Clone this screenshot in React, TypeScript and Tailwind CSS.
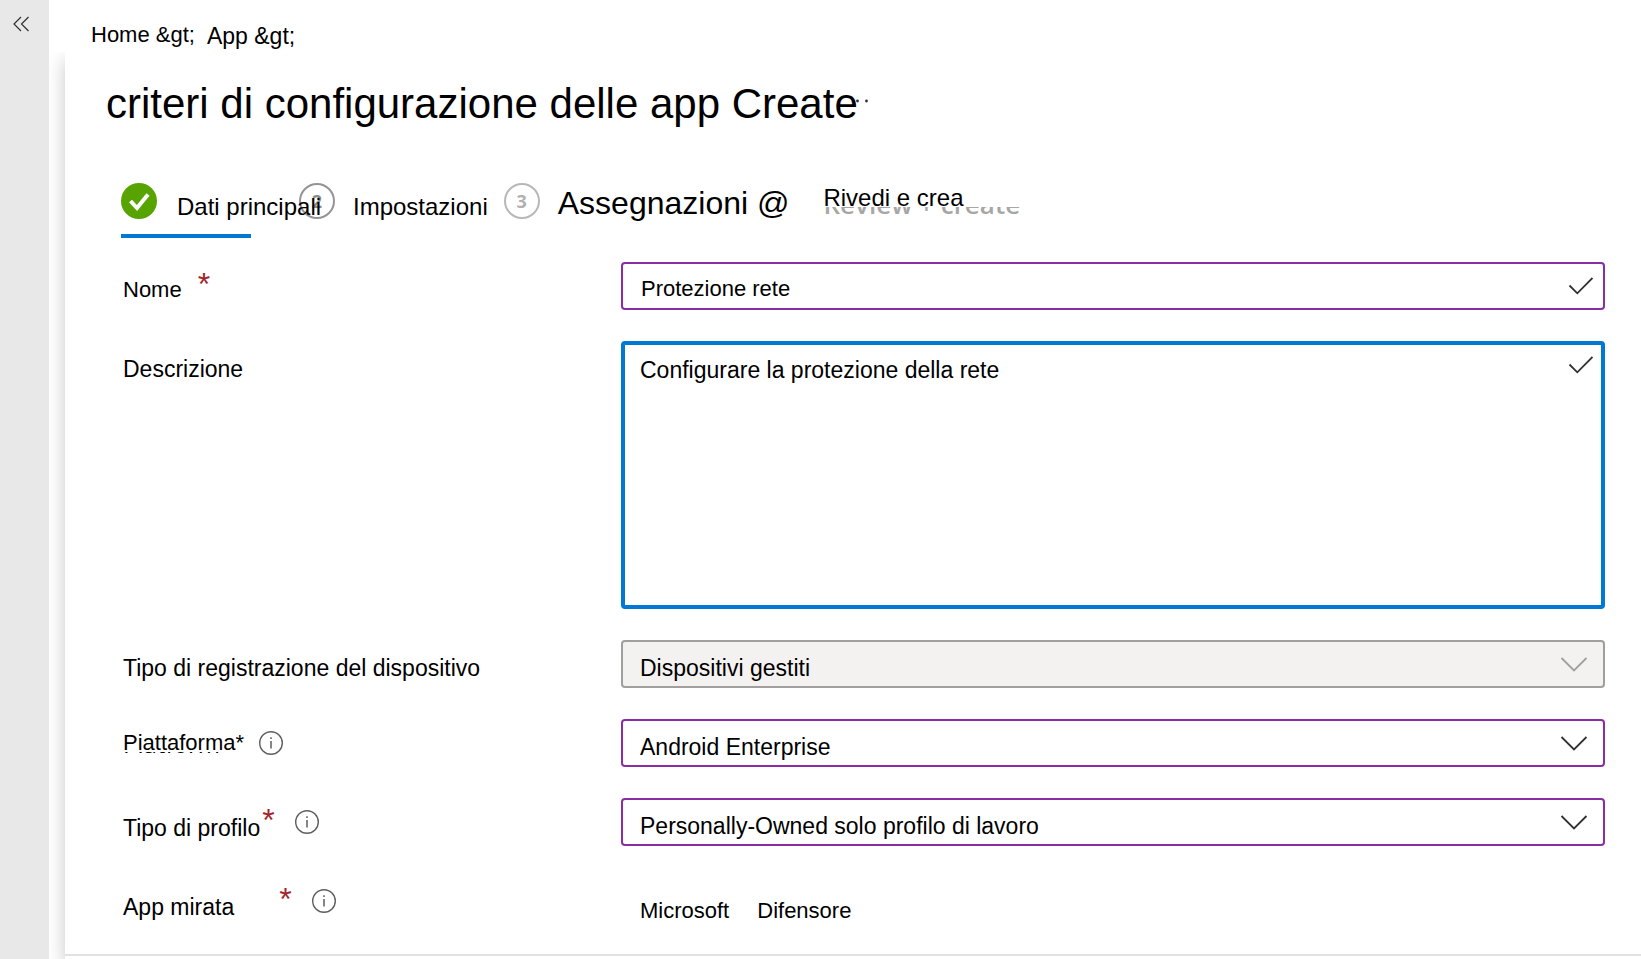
import { FC, ReactNode } from "react";

interface FieldRowProps {
  id: string;
  label: ReactNode;
  labelClass?: string;
  extras?: ReactNode;
  children: ReactNode;
}

const FieldRow: FC<FieldRowProps> = ({ id, label, labelClass = "pt-2", extras, children }) => {
  return (
    <div className="grid grid-cols-[500px_1fr] items-start">
      <div className="flex h-12 items-center pl-0.5">
        <label htmlFor={id} className={`relative leading-7 whitespace-nowrap ${labelClass}`}>
          {label}
        </label>
        {extras}
      </div>
      <div className="relative">{children}</div>
    </div>
  );
};

const Required: FC<{ className?: string }> = ({ className = "" }) => (
  <span className={`h-12 pt-0.5 text-[32px] leading-10 text-[#a4262c] ${className}`}>*</span>
);

const InfoButton: FC<{ label: string; className?: string }> = ({ label, className = "" }) => (
  <button type="button" aria-label={label} className={className}>
    <svg width="24" height="24" viewBox="0 0 24 24" fill="none" stroke="#605e5c">
      <circle cx="12" cy="12" r="11.3" strokeWidth="1.4" />
      <path d="M12 10v7.5M12 6.3v1.8" strokeWidth="1.5" />
    </svg>
  </button>
);

const CheckIcon = () => (
  <svg
    className="pointer-events-none absolute top-3.5 right-3"
    width="25"
    height="20"
    viewBox="0 0 25 20"
    fill="none"
    stroke="#323130"
    strokeWidth="1.8"
  >
    <path d="M1.5 9.5l7.8 7.8L24.5 2" />
  </svg>
);

interface DropdownProps {
  id: string;
  value: string;
  disabled?: boolean;
}

const Dropdown: FC<DropdownProps> = ({ id, value, disabled }) => {
  return (
    <>
      <select
        id={id}
        disabled={disabled}
        className="h-12 w-full appearance-none rounded border-2 border-[#8a2da5] bg-white pt-2 pl-[17px] text-black opacity-100 outline-none disabled:border-[#a19f9d] disabled:bg-[#f3f2f1]"
      >
        <option>{value}</option>
      </select>
      <svg
        className="pointer-events-none absolute top-[17px] right-[17px]"
        width="28"
        height="16"
        viewBox="0 0 28 16"
        fill="none"
        stroke={disabled ? "#a19f9d" : "#323130"}
        strokeWidth="1.8"
      >
        <path d="M1.5 1l12.5 12.5L26.5 1" />
      </svg>
    </>
  );
};

const StepNumber: FC<{ n: number; className: string }> = ({ n, className }) => (
  <span
    className={`flex size-9 shrink-0 items-center justify-center rounded-full border-2 font-['Open_Sans',sans-serif] text-lg font-bold ${className}`}
  >
    {n}
  </span>
);

const Steps = () => (
  <nav className="flex h-[55px] items-start pl-14 text-2xl whitespace-nowrap">
    <button
      type="button"
      className="relative z-10 flex h-[55px] w-[130px] items-start gap-5 border-b-4 border-[#0078d4] whitespace-nowrap"
    >
      <svg className="shrink-0" width="36" height="36" viewBox="0 0 36 36" fill="none">
        <circle cx="18" cy="18" r="18" fill="#57a300" />
        <path d="M9.5 18l6.5 7L27 11.5" stroke="#fff" strokeWidth="4" />
      </svg>
      <span className="pt-2">Dati principali</span>
    </button>
    <button type="button" className="ml-12 flex items-start gap-[18px]">
      <StepNumber n={2} className="border-[#949494] text-[#8a8a8a]" />
      <span className="pt-2">Impostazioni</span>
    </button>
    <button type="button" className="ml-4 flex items-start gap-[18px]">
      <StepNumber n={3} className="border-[#b8b8b8] text-[#b0b0b0]" />
      <span className="text-[32px] leading-10">Assegnazioni @</span>
    </button>
    <button type="button" className="relative ml-[34px]">
      <span className="block leading-[30px]">Rivedi e crea</span>
      <span
        aria-hidden="true"
        className="absolute top-6 left-0 flex h-[13px] items-end overflow-hidden font-['Open_Sans',sans-serif] text-[26px] font-semibold text-[#a6a6a6]"
      >
        <span className="leading-8">Review + create</span>
      </span>
    </button>
  </nav>
);

const App = () => {
  return (
    <div className="flex min-h-screen bg-white font-['Liberation_Sans',Arial,sans-serif] text-black">
      <aside className="w-[49px] shrink-0 bg-[#e8e8e8]">
        <button type="button" aria-label="Espandi menu" className="mt-4 ml-3 block">
          <svg width="18" height="16" viewBox="0 0 18 16" fill="none" stroke="#323130" strokeWidth="1.2">
            <path d="M9 1L2 8l7 7M16.5 1l-7 7 7 7" />
          </svg>
        </button>
      </aside>

      <div className="flex min-w-0 flex-1 flex-col">
        <header className="flex h-13 items-start gap-3 pt-[21px] pl-[42px] leading-7">
          <a href="#home" className="text-[22px]">
            Home &amp;gt;
          </a>
          <a href="#app" className="pt-px text-[23px]">
            App &amp;gt;
          </a>
        </header>

        <div className="flex flex-1 overflow-hidden pl-4">
          <main className="flex flex-1 flex-col bg-white shadow-[0_8px_18px_rgba(0,0,0,0.22)]">
            <div className="flex pt-7 pl-[41px]">
              <h1 className="text-[42px] leading-12">criteri di configurazione delle app Create</h1>
              <button type="button" aria-label="Altro" className="-ml-3 self-start pt-[19px]">
                <svg width="24" height="4" viewBox="0 0 24 4" fill="#323130">
                  <circle cx="11.5" cy="2" r="1.4" />
                  <circle cx="20.5" cy="2" r="1.4" />
                </svg>
              </button>
            </div>

            <div className="pt-[55px]">
              <Steps />
            </div>

            <form className="flex flex-col gap-[31px] pt-6 pr-9 pl-14 text-[23px]">
              <FieldRow
                id="name"
                label="Nome"
                labelClass="pt-2 text-[22px]"
                extras={<Required className="ml-4" />}
              >
                <input
                  id="name"
                  type="text"
                  defaultValue="Protezione rete"
                  className="block h-12 w-full rounded border-2 border-[#8a2da5] pt-1.5 pl-[18px] text-[22px] outline-none"
                />
                <CheckIcon />
              </FieldRow>

              <FieldRow id="description" label="Descrizione">
                <textarea
                  id="description"
                  defaultValue="Configurare la protezione della rete"
                  className="block h-[268px] w-full resize-none rounded border-4 border-[#0078d4] pt-[11px] pl-[15px] leading-7 outline-none"
                />
                <CheckIcon />
              </FieldRow>

              <FieldRow id="enrollment" label="Tipo di registrazione del dispositivo">
                <Dropdown id="enrollment" value="Dispositivi gestiti" disabled />
              </FieldRow>

              <FieldRow
                id="platform"
                label={
                  <>
                    Piattaforma*
                    <span
                      aria-hidden="true"
                      className="absolute top-[23px] left-0 flex h-px items-end overflow-hidden font-['Open_Sans',sans-serif] text-2xl"
                    >
                      <span className="-mb-[7px] leading-8">Platform</span>
                    </span>
                  </>
                }
                labelClass="text-[22px]"
                extras={<InfoButton label="Informazioni sulla piattaforma" className="ml-[15px]" />}
              >
                <Dropdown id="platform" value="Android Enterprise" />
              </FieldRow>

              <FieldRow
                id="profile"
                label="Tipo di profilo"
                labelClass="pt-3"
                extras={
                  <>
                    <Required className="ml-0.5" />
                    <InfoButton label="Informazioni sul tipo di profilo" className="ml-5" />
                  </>
                }
              >
                <Dropdown id="profile" value="Personally-Owned solo profilo di lavoro" />
              </FieldRow>

              <FieldRow
                id="target"
                label="App mirata"
                labelClass="pt-3"
                extras={
                  <>
                    <Required className="ml-[45px]" />
                    <InfoButton label="Informazioni sull'app mirata" className="ml-5" />
                  </>
                }
              >
                <output id="target" className="flex gap-7 pt-5 pl-[19px] text-[22px] leading-7">
                  <span>Microsoft</span>
                  <span>Difensore</span>
                </output>
              </FieldRow>
            </form>

            <footer className="mt-auto h-[5px] border-t-2 border-[#e1e1e1]" />
          </main>
        </div>
      </div>
    </div>
  );
};

export default App;
